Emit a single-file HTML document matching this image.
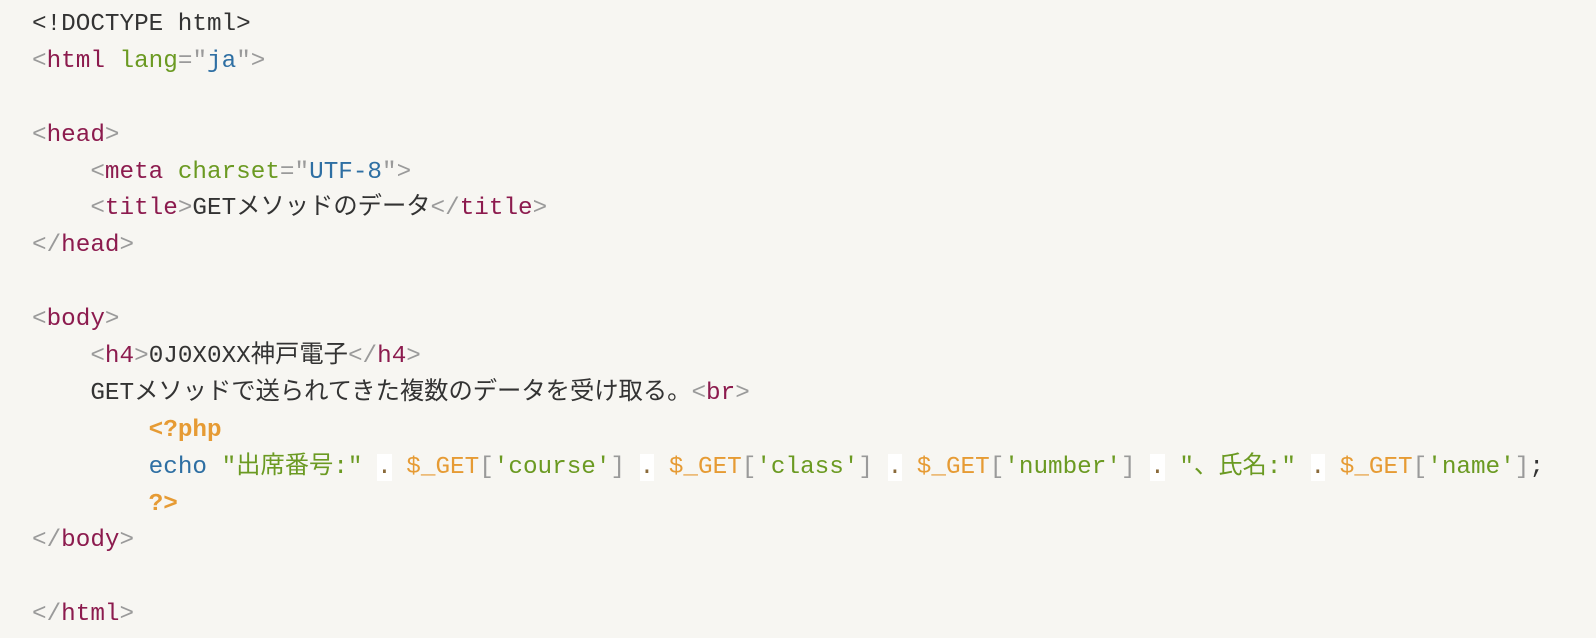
<!DOCTYPE html>
<html><head><meta charset="utf-8"><style>
body{margin:0;background:#f7f6f2;}
pre{margin:0;padding:7px 0 0 32px;font-family:"Liberation Mono","Noto Sans CJK JP",monospace;font-size:24.3px;line-height:36.9px;color:#333;}
pre div{height:36.9px;white-space:pre;}
.b{color:#9a9a9a}.t{color:#8c1b4e}.a{color:#6b9a22}.s{color:#2e6fa3}.p{color:#e69b34}.pb{color:#e69b34;font-weight:bold}.g{color:#6b9a22}
.d{background:#fff;color:#8a6a3a}
</style></head><body><pre><div>&lt;!DOCTYPE html&gt;</div><div><span class="b">&lt;</span><span class="t">html</span> <span class="a">lang</span><span class="b">=</span><span class="b">"</span><span class="s">ja</span><span class="b">"</span><span class="b">&gt;</span></div><div> </div><div><span class="b">&lt;</span><span class="t">head</span><span class="b">&gt;</span></div><div>    <span class="b">&lt;</span><span class="t">meta</span> <span class="a">charset</span><span class="b">=</span><span class="b">"</span><span class="s">UTF-8</span><span class="b">"</span><span class="b">&gt;</span></div><div>    <span class="b">&lt;</span><span class="t">title</span><span class="b">&gt;</span>GETメソッドのデータ<span class="b">&lt;/</span><span class="t">title</span><span class="b">&gt;</span></div><div><span class="b">&lt;/</span><span class="t">head</span><span class="b">&gt;</span></div><div> </div><div><span class="b">&lt;</span><span class="t">body</span><span class="b">&gt;</span></div><div>    <span class="b">&lt;</span><span class="t">h4</span><span class="b">&gt;</span>0J0X0XX神戸電子<span class="b">&lt;/</span><span class="t">h4</span><span class="b">&gt;</span></div><div>    GETメソッドで送られてきた複数のデータを受け取る。<span class="b">&lt;</span><span class="t">br</span><span class="b">&gt;</span></div><div>        <span class="pb">&lt;?php</span></div><div>        <span class="s">echo</span> <span class="g">"出席番号:"</span> <span class="d">.</span> <span class="p">$_GET</span><span class="b">[</span><span class="g">'course'</span><span class="b">]</span> <span class="d">.</span> <span class="p">$_GET</span><span class="b">[</span><span class="g">'class'</span><span class="b">]</span> <span class="d">.</span> <span class="p">$_GET</span><span class="b">[</span><span class="g">'number'</span><span class="b">]</span> <span class="d">.</span> <span class="g">"、氏名:"</span> <span class="d">.</span> <span class="p">$_GET</span><span class="b">[</span><span class="g">'name'</span><span class="b">]</span>;</div><div>        <span class="pb">?&gt;</span></div><div><span class="b">&lt;/</span><span class="t">body</span><span class="b">&gt;</span></div><div> </div><div><span class="b">&lt;/</span><span class="t">html</span><span class="b">&gt;</span></div></pre></body></html>
